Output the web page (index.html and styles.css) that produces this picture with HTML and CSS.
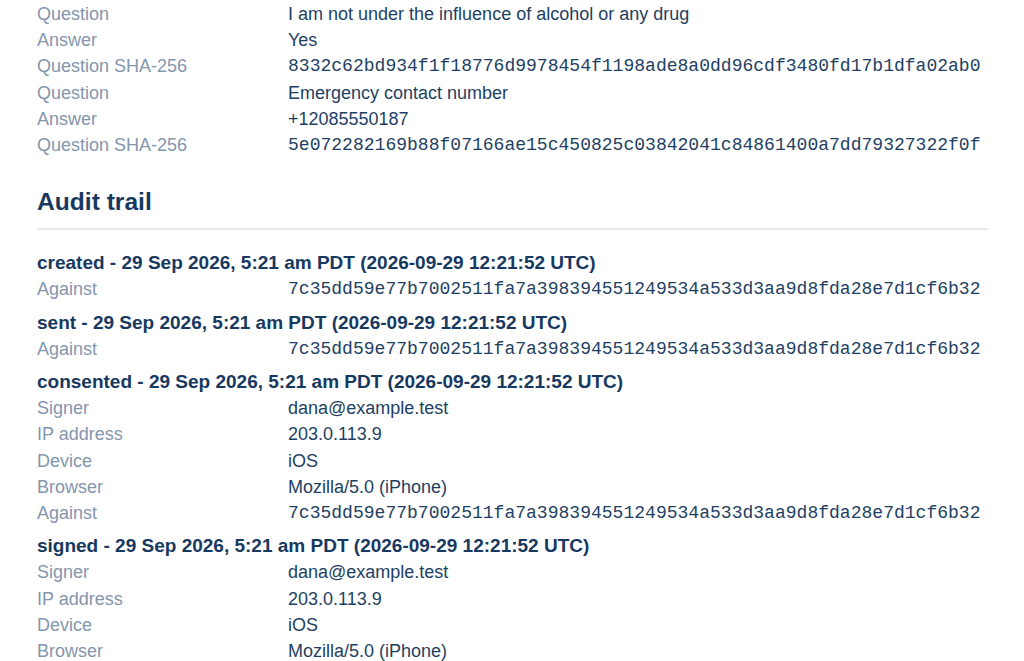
FILE: index.html
```html
<!DOCTYPE html>
<html>
<head>
<meta charset="utf-8">
<link rel="stylesheet" href="styles.css">
</head>
<body>
<div class="page">
  <dl class="fields">
    <dt>Question</dt><dd>I am not under the influence of alcohol or any drug</dd>
    <dt>Answer</dt><dd>Yes</dd>
    <dt>Question SHA-256</dt><dd class="mono">8332c62bd934f1f18776d9978454f1198ade8a0dd96cdf3480fd17b1dfa02ab0</dd>
    <dt>Question</dt><dd>Emergency contact number</dd>
    <dt>Answer</dt><dd>+12085550187</dd>
    <dt>Question SHA-256</dt><dd class="mono">5e072282169b88f07166ae15c450825c03842041c84861400a7dd79327322f0f</dd>
  </dl>

  <h2 class="section-title">Audit trail</h2>

  <div class="events">
    <div class="event">
      <h3>created - 29 Sep 2026, 5:21 am PDT (2026-09-29 12:21:52 UTC)</h3>
      <dl class="fields">
        <dt>Against</dt><dd class="mono">7c35dd59e77b7002511fa7a398394551249534a533d3aa9d8fda28e7d1cf6b32</dd>
      </dl>
    </div>
    <div class="event">
      <h3>sent - 29 Sep 2026, 5:21 am PDT (2026-09-29 12:21:52 UTC)</h3>
      <dl class="fields">
        <dt>Against</dt><dd class="mono">7c35dd59e77b7002511fa7a398394551249534a533d3aa9d8fda28e7d1cf6b32</dd>
      </dl>
    </div>
    <div class="event">
      <h3>consented - 29 Sep 2026, 5:21 am PDT (2026-09-29 12:21:52 UTC)</h3>
      <dl class="fields">
        <dt>Signer</dt><dd>dana@example.test</dd>
        <dt>IP address</dt><dd>203.0.113.9</dd>
        <dt>Device</dt><dd>iOS</dd>
        <dt>Browser</dt><dd>Mozilla/5.0 (iPhone)</dd>
        <dt>Against</dt><dd class="mono">7c35dd59e77b7002511fa7a398394551249534a533d3aa9d8fda28e7d1cf6b32</dd>
      </dl>
    </div>
    <div class="event">
      <h3>signed - 29 Sep 2026, 5:21 am PDT (2026-09-29 12:21:52 UTC)</h3>
      <dl class="fields">
        <dt>Signer</dt><dd>dana@example.test</dd>
        <dt>IP address</dt><dd>203.0.113.9</dd>
        <dt>Device</dt><dd>iOS</dd>
        <dt>Browser</dt><dd>Mozilla/5.0 (iPhone)</dd>
        <dt>Against</dt><dd class="mono">7c35dd59e77b7002511fa7a398394551249534a533d3aa9d8fda28e7d1cf6b32</dd>
      </dl>
    </div>
  </div>
</div>
</body>
</html>
```

FILE: styles.css
```css
html, body {
  margin: 0;
  padding: 0;
  background: #ffffff;
}
body {
  font-family: "Liberation Sans", Arial, sans-serif;
  font-size: 18px;
  color: #1e3f63;
}
.page {
  padding: 1px 36px 0 37px;
}
.fields {
  display: grid;
  grid-template-columns: 251px 1fr;
  margin: 0;
  line-height: 26.2px;
}
.fields dt {
  color: #8496ac;
  margin: 0;
}
.fields dd {
  margin: 0;
  color: #1e3f63;
  white-space: nowrap;
}
.mono {
  font-family: "Liberation Mono", "Courier New", monospace;
  font-size: 18.05px;
}
.section-title {
  margin: 29px 0 0;
  font-size: 24.6px;
  line-height: 30px;
  font-weight: bold;
  color: #17395f;
  padding-bottom: 11px;
  border-bottom: 2px solid #e6e9ed;
}
.events {
  padding-top: 13px;
}
.event h3 {
  margin: 7px 0 0;
  font-size: 19px;
  line-height: 26.2px;
  font-weight: bold;
  color: #17395f;
}
```
